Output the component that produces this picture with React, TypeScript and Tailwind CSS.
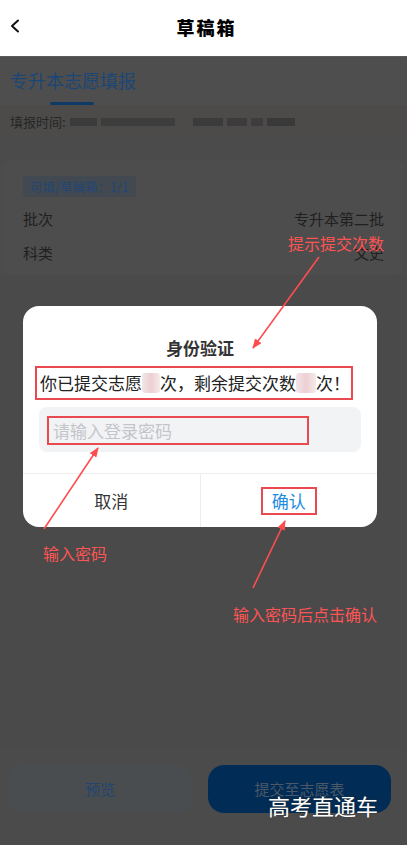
import React from "react";

const font = { fontFamily: '"Noto Sans CJK SC", "Noto Sans", sans-serif' };

function Blur({ w }: { w: number }) {
  // pixelated digit in the screenshot
  return (
    <span
      className="inline-block align-middle h-[20px] rounded-[3px] bg-gradient-to-r from-[#f2e6e8] via-[#eccfd3] to-[#f5eaec]"
      style={{ width: w }}
    />
  );
}

export default function App() {
  return (
    <main className="relative w-[407px] h-[845px] overflow-hidden bg-[#4a4a4a]" style={font}>

      {/* Header */}
      <header className="relative h-[57px] bg-white flex items-center justify-center border-b border-[#5a5a5a]">
        <svg className="absolute left-[9px] top-[19px]" width="12" height="14" viewBox="0 0 12 14">
          <path d="M9 1.5 L3 7 L9 12.5" fill="none" stroke="#111" strokeWidth="2" strokeLinecap="round" strokeLinejoin="round" />
        </svg>
        <h1 className="text-[18px] font-black tracking-[2px] text-black -mt-[1px] ml-[6px]">草稿箱</h1>
      </header>

      {/* Page under the mask */}
      <div className="flex flex-col bg-[#4b4b4b]">
        <div className="px-[10px] pt-[10px] bg-[#4e4e4e]">
          <p className="text-[18px] leading-[26px] text-[#1c4676]">专升本志愿填报</p>
          <div className="ml-[40px] mt-[9px] w-[44px] h-[3px] rounded-full bg-[#0f3a68]" />
        </div>
        <div className="flex items-center px-[10px] h-[34px] text-[13px] text-[#262626] bg-[#4c4b49]">
          <span>填报时间:</span>
          <div className="flex items-center gap-[4px] ml-[4px]">
            <span className="w-[27px] h-[8px] bg-[#3b3b3b]" />
            <span className="w-[74px] h-[8px] bg-[#3d3d3d]" />
            <span className="w-[30px] h-[8px] ml-[14px] bg-[#3b3b3b]" />
            <span className="w-[20px] h-[8px] bg-[#3c3c3c]" />
            <span className="w-[12px] h-[8px] bg-[#3d3d3d]" />
            <span className="w-[28px] h-[8px] bg-[#393939]" />
          </div>
        </div>

        <div className="mx-[4px] mt-[21px] h-[115px] rounded-[6px] bg-[#4d4d4d] px-[19px] pt-[13px]">
          <span className="inline-block h-[21px] leading-[21px] px-[7px] rounded-[2px] bg-[#424950] text-[12.5px] text-[#234775]">
            可填/草稿箱：1/1
          </span>
          <div className="flex justify-between text-[15px] text-[#202020] mt-[10px] leading-[24px]">
            <span>批次</span>
            <span>专升本第二批</span>
          </div>
          <div className="flex justify-between text-[15px] text-[#202020] mt-[10px] leading-[24px]">
            <span>科类</span>
            <span>文史</span>
          </div>
        </div>
      </div>

      {/* Bottom bar */}
      <div className="absolute left-0 right-0 bottom-0 h-[95px] bg-[#4b4b4b] flex gap-[16px] px-[8px] pt-[15px]">
        <button className="w-[184px] h-[48px] rounded-[16px] bg-[#4a4d50] text-[15px] text-[#1e4670]">预览</button>
        <button className="w-[183px] h-[48px] rounded-[16px] bg-[#012c55] text-[15px] text-[#4a5868]">提交至志愿表</button>
      </div>
      <span className="absolute left-[268px] top-[790px] text-[22px] leading-[30px] text-white [text-shadow:0_0_2px_#333]">
        高考直通车
      </span>

      {/* Dialog */}
      <div className="absolute left-[23px] top-[306px] w-[354px] h-[221px] rounded-[16px] bg-white flex flex-col">
        <h2 className="text-center text-[17px] font-bold leading-[24px] text-[#333] pt-[30px]">身份验证</h2>
        <div className="ml-[12px] mt-[6px] w-[318px] h-[34px] border-2 border-[#ea4a4f] flex items-center pl-[3px] text-[17px] text-[#222] whitespace-nowrap">
          你已提交志愿<Blur w={18} />次，剩余提交次数<Blur w={20} />次！
        </div>
        <div className="mx-[16px] mt-[7px] h-[45px] rounded-[8px] bg-[#f2f3f5] pt-[9px] pl-[8px]">
          <div className="w-[262px] h-[29px] border-2 border-[#ea4a4f] pl-[4px] text-[17px] leading-[25px] text-[#c3c5ca]">
            请输入登录密码
          </div>
        </div>
        <div className="mt-[21px] flex-1 flex border-t border-[#eeeeee]">
          <button className="flex-1 text-[17px] text-[#333]">取消</button>
          <div className="w-px bg-[#eeeeee]" />
          <button className="flex-1 flex items-center justify-center">
            <span className="w-[56px] h-[28px] border-2 border-[#ea4a4f] text-[17px] leading-[24px] text-[#1d8ce0]">确认</span>
          </button>
        </div>
      </div>

      {/* Annotations */}
      <span className="absolute left-[288px] top-[232px] text-[16px] leading-[22px] text-[#ff5454]">提示提交次数</span>
      <span className="absolute left-[43px] top-[542px] text-[16px] leading-[22px] text-[#ff5454]">输入密码</span>
      <span className="absolute left-[233px] top-[603px] text-[16px] leading-[22px] text-[#ff5454]">输入密码后点击确认</span>
      <svg className="absolute inset-0 pointer-events-none" width="407" height="845">
        <defs>
          <marker id="ah" markerWidth="10" markerHeight="8" refX="9" refY="4" orient="auto" markerUnits="userSpaceOnUse">
            <path d="M0 0 L10 4 L0 8 Z" fill="#ff4d4f" />
          </marker>
        </defs>
        <line x1="319" y1="257" x2="253" y2="348" stroke="#ff4d4f" strokeWidth="1.6" markerEnd="url(#ah)" />
        <line x1="44" y1="529" x2="98" y2="448" stroke="#ff4d4f" strokeWidth="1.6" markerEnd="url(#ah)" />
        <line x1="253" y1="588" x2="285" y2="521" stroke="#ff4d4f" strokeWidth="1.6" markerEnd="url(#ah)" />
      </svg>
    </main>
  );
}
